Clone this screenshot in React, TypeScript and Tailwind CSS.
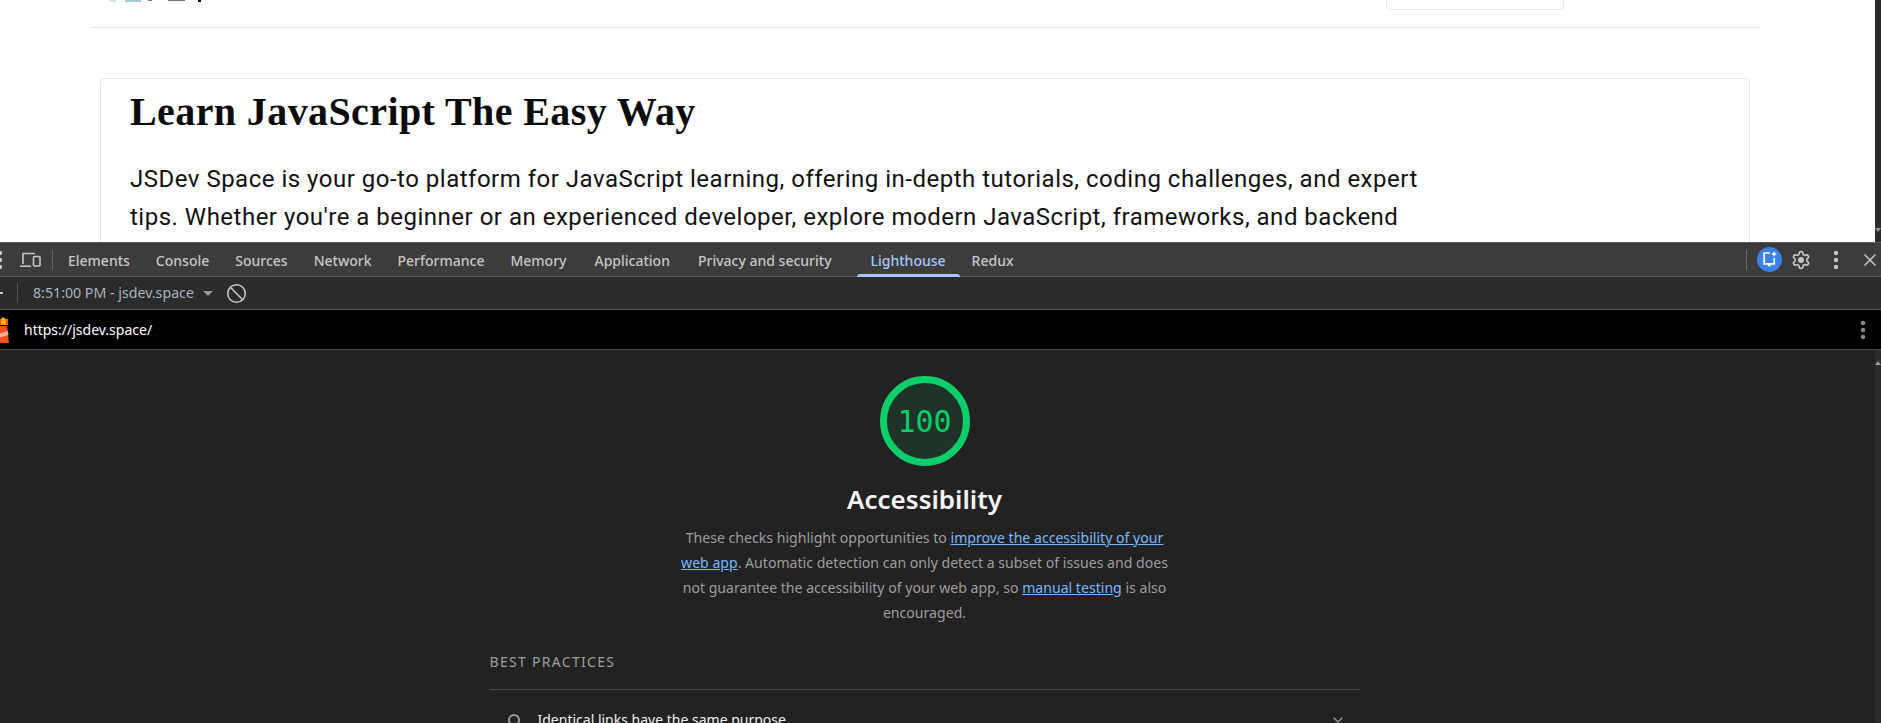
import { Ban, ChevronDown, X } from "lucide-react";

const ui = "font-['Noto_Sans',sans-serif]";

const tabs = ["Elements", "Console", "Sources", "Network", "Performance", "Memory", "Application", "Privacy and security"];

function Dots({ className }: { className: string }) {
  return (
    <svg width="6" height="20" viewBox="0 0 6 20" className={className} fill="currentColor">
      <circle cx="3" cy="3" r="2.2" />
      <circle cx="3" cy="10" r="2.2" />
      <circle cx="3" cy="17" r="2.2" />
    </svg>
  );
}

function DeviceIcon() {
  return (
    <svg width="22" height="18" viewBox="0 0 22 18" fill="none" stroke="#c7c7c7" strokeWidth="1.6">
      <path d="M3 13V2.500h12M0 15.200h11" />
      <rect x="13.500" y="5.500" width="6.500" height="9.500" rx="1" />
    </svg>
  );
}

function AiIcon() {
  return (
    <div className="flex h-[25px] w-[25px] items-center justify-center rounded-full bg-[#3b82e6]">
      <svg width="15" height="17" viewBox="0 0 15 17" fill="none">
        <path d="M8 2H2.200v10.800h10V7" stroke="#fff" strokeWidth="1.700" />
        <path d="M5 13.500h4.600L7.300 16z" fill="#fff" />
        <path d="M12 0l.9 2.100L15 3l-2.100.9L12 6l-.9-2.100L9 3l2.100-.9z" fill="#fff" />
      </svg>
    </div>
  );
}

function GearIcon() {
  return (
    <svg width="20" height="20" viewBox="0 0 24 24" fill="none" stroke="#c7c7c7" strokeWidth="2">
      <path d="M12.220 2h-.44a2 2 0 0 0-2 2v.18a2 2 0 0 1-1 1.730l-.43.25a2 2 0 0 1-2 0l-.15-.08a2 2 0 0 0-2.730.73l-.22.380a2 2 0 0 0 .73 2.730l.15.1a2 2 0 0 1 1 1.720v.510a2 2 0 0 1-1 1.740l-.15.090a2 2 0 0 0-.73 2.730l.22.380a2 2 0 0 0 2.730.73l.15-.08a2 2 0 0 1 2 0l.43.25a2 2 0 0 1 1 1.730V20a2 2 0 0 0 2 2h.44a2 2 0 0 0 2-2v-.18a2 2 0 0 1 1-1.730l.43-.25a2 2 0 0 1 2 0l.15.080a2 2 0 0 0 2.730-.73l.22-.390a2 2 0 0 0-.73-2.730l-.15-.08a2 2 0 0 1-1-1.740v-.5a2 2 0 0 1 1-1.740l.15-.090a2 2 0 0 0 .73-2.730l-.22-.380a2 2 0 0 0-2.730-.73l-.15.080a2 2 0 0 1-2 0l-.43-.25a2 2 0 0 1-1-1.730V4a2 2 0 0 0-2-2z" />
      <circle cx="12" cy="12" r="3.500" fill="#c7c7c7" stroke="none" />
    </svg>
  );
}

function LighthouseIcon() {
  return (
    <svg width="12" height="30" viewBox="0 0 12 30" className="shrink-0">
      <path d="M0 5l3-3 4 3v5H0z" fill="#f4b400" />
      <path d="M-1 4h2v6h-2zM6 4h2v6H6z" fill="#f4511e" />
      <path d="M-1 11h8l2 17H-3z" fill="#f4511e" />
      <path d="M-2 19l10-3 .5 4L-2 23z" fill="#ffab91" />
    </svg>
  );
}

function SiteHeader() {
  return (
    <div className="ml-[90px] flex h-[28px] w-[1670px] items-start justify-between border-b border-[#e5e5e5]">
      <svg width="100" height="3" viewBox="0 0 100 3" className="ml-[20px]">
        <rect x="0" width="6" height="2" fill="#cfe3ea" />
        <rect x="15" width="16" height="2" fill="#a7cbdb" />
        <rect x="38" width="4" height="1" fill="#777" />
        <rect x="58" width="17" height="1" fill="#777" />
        <rect x="88" width="3" height="2" fill="#111" />
      </svg>
      <div className="mr-[196px] h-[10px] w-[178px] rounded-b-[5px] border border-t-0 border-[#e5e5e5]" />
    </div>
  );
}

function IntroCard() {
  return (
    <div className="ml-[100px] mt-[50px] h-[200px] w-[1650px] rounded-t-[4px] border border-[#e5e5e5] pl-[29px] pt-[10px]">
      <h1 className="text-[40px] font-bold leading-[46px] tracking-[0.4px] text-[#0a0a0a] font-['Liberation_Serif',serif]">
        Learn JavaScript The Easy Way
      </h1>
      <p className="mt-[25px] w-[1300px] text-[24px] leading-[38px] tracking-[0.5px] text-[#111] font-['Roboto',sans-serif]">
        JSDev Space is your go-to platform for JavaScript learning, offering in-depth tutorials, coding challenges, and expert tips. Whether you're a beginner or an experienced developer, explore modern JavaScript, frameworks, and backend
      </p>
    </div>
  );
}

function DevtoolsTabs() {
  return (
    <div className={`flex h-[35px] shrink-0 items-center border-t border-b border-[#5a5a5a] bg-[#3c3c3c] text-[14px] text-[#c7c7c7] ${ui}`}>
      <Dots className="ml-[-3px] mr-[17px] text-[#c7c7c7]" />
      <DeviceIcon />
      <div className="ml-[10px] h-[20px] w-px bg-[#666]" />
      <div className="ml-[2px] flex items-center pt-[2px]">
        {tabs.map((t) => (
          <span key={t} className={t === "Application" ? "px-[15px] font-medium" : "px-[13px] font-medium"}>{t}</span>
        ))}
      </div>
      <span className="relative ml-[12px] flex h-full items-center px-[14px] pt-[2px] font-medium text-[#a8c7fa]">
        Lighthouse
        <span className="absolute bottom-[-1px] left-0 right-0 h-[3px] rounded-t-[3px] bg-[#a8c7fa]" />
      </span>
      <span className="px-[12px] pt-[2px] font-medium">Redux</span>
      <div className="ml-auto mr-[10px] h-[20px] w-px bg-[#666]" />
      <AiIcon />
      <div className="ml-[9px]"><GearIcon /></div>
      <Dots className="ml-[22px] text-[#c7c7c7]" />
      <X size={20} strokeWidth={1.8} className="ml-[21px] mr-[1px] text-[#c7c7c7]" />
    </div>
  );
}

function ReportToolbar() {
  return (
    <div className={`flex h-[33px] shrink-0 items-center border-b border-[#5a5a5a] bg-[#2b2b2b] text-[14.2px] text-[#a9b4bf] ${ui}`}>
      <div className="h-[2px] w-[3px] bg-[#c7c7c7]" />
      <div className="ml-[14px] h-[20px] w-px bg-[#555]" />
      <span className="ml-[15px]">8:51:00 PM - jsdev.space</span>
      <span className="ml-[9px] h-0 w-0 border-x-[5px] border-t-[5px] border-x-transparent border-t-[#999]" />
      <Ban size={21} strokeWidth={1.8} className="ml-[13px] text-[#c7c7c7]" />
    </div>
  );
}

function UrlBar() {
  return (
    <div className={`flex h-[40px] shrink-0 items-center border-b border-[#4a4a4a] bg-black text-[14px] text-white ${ui}`}>
      <LighthouseIcon />
      <span className="ml-[12px]">https://jsdev.space/</span>
      <Dots className="ml-auto mr-[15px] text-[#8a8a8a]" />
    </div>
  );
}

function Gauge() {
  return (
    <div className="flex h-[90px] w-[90px] shrink-0 items-center justify-center rounded-full border-[7px] border-[#0cce6b] bg-[#1f3329] text-[30px] text-[#0cce6b] font-['DejaVu_Sans_Mono',monospace]">
      100
    </div>
  );
}

function Report() {
  return (
    <div className="flex min-h-0 flex-1 overflow-hidden">
      <div className={`flex flex-1 flex-col items-center bg-[#222222] pr-[26px] pt-[26px] ${ui}`}>
        <Gauge />
        <h2 className="mt-[13px] shrink-0 text-[26px] font-semibold leading-[40px] text-[#f5f5f5]">Accessibility</h2>
        <p className="mt-[6px] w-[500px] shrink-0 text-center text-[14.1px] leading-[25px] text-[#9e9e9e]">
          These checks highlight opportunities to{" "}
          <a className="text-[#78b9ff] underline">improve the accessibility of your web app</a>. Automatic detection can only detect a subset of issues and does not guarantee the accessibility of your web app, so{" "}
          <a className="text-[#78b9ff] underline">manual testing</a> is also encouraged.
        </p>
        <div className="mt-[27px] w-[870px] shrink-0">
          <div className="pb-[17px] text-[14px] leading-[20px] tracking-[1.3px] text-[#9e9e9e]">BEST PRACTICES</div>
          <div className="flex items-center border-t border-[#4a4a4a] pl-[18px] pr-[14px] pt-[21px]">
            <span className="h-[12px] w-[12px] rounded-full border-2 border-[#9e9e9e]" />
            <span className="ml-[18px] text-[14px] leading-[18px] text-[#f0f0f0]">Identical links have the same purpose</span>
            <ChevronDown size={16} className="ml-auto text-[#9e9e9e]" />
          </div>
        </div>
      </div>
      <div className="flex w-[6px] justify-center bg-[#2b2b2b] pt-[11px]">
        <span className="h-0 w-0 border-x-[3px] border-b-[4px] border-x-transparent border-b-[#999]" />
      </div>
    </div>
  );
}

export default function App() {
  return (
    <div className="flex h-[723px] w-[1881px] flex-col overflow-hidden bg-white">
      <div className="flex h-[242px] shrink-0 overflow-hidden">
        <div className="flex-1">
          <SiteHeader />
          <IntroCard />
        </div>
        <div className="flex w-[6px] items-end justify-center bg-[#2b2b2b] pb-[10px]">
          <span className="h-0 w-0 border-x-[3px] border-t-[4px] border-x-transparent border-t-[#999]" />
        </div>
      </div>
      <DevtoolsTabs />
      <ReportToolbar />
      <UrlBar />
      <Report />
    </div>
  );
}
